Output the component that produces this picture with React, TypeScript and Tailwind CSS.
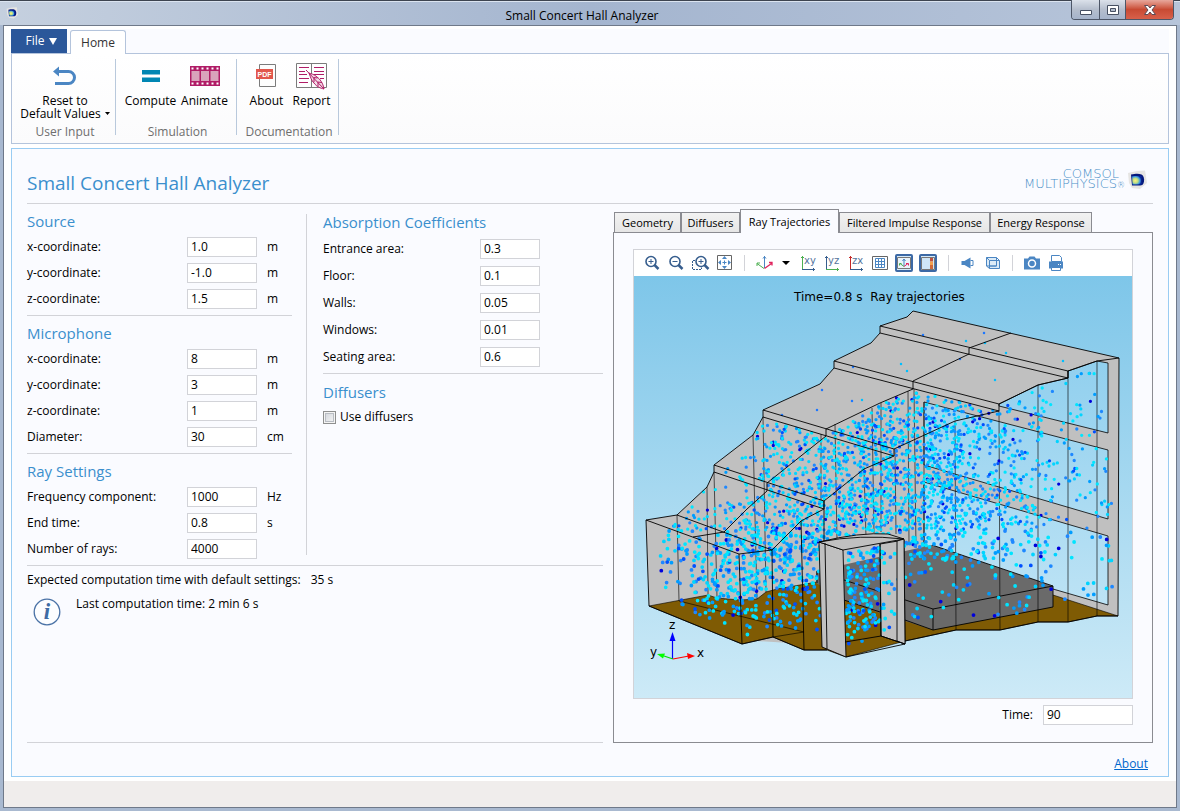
import { useId, useState, type ReactNode } from "react";

interface FieldProps {
  label: string
  value: string
  unit?: string
}

type Point = [number, number]

const TABS = [
  { name: "Geometry", width: "w-[67px]" },
  { name: "Diffusers", width: "w-[59px]" },
  { name: "Ray Trajectories", width: "w-[99px]" },
  { name: "Filtered Impulse Response", width: "w-[151px]" },
  { name: "Energy Response", width: "w-[102px]" },
]

// Small seeded generator so the ray positions are the same on every load
function createRandom(seed: number) {
  let a = seed
  return () => {
    a = (a + 0x6d2b79f5) | 0
    let t = Math.imul(a ^ (a >>> 15), 1 | a)
    t = (t + Math.imul(t ^ (t >>> 7), 61 | t)) ^ t
    return ((t ^ (t >>> 14)) >>> 0) / 4294967296
  }
}

function isInside([x, y]: Point, polygon: Point[]) {
  let inside = false
  for (let i = 0, j = polygon.length - 1; i < polygon.length; j = i++) {
    const [xi, yi] = polygon[i]
    const [xj, yj] = polygon[j]
    if (yi > y !== yj > y && x < ((xj - xi) * (y - yi)) / (yj - yi) + xi) inside = !inside
  }
  return inside
}

const HALL: Point[] = [
  [656, 530], [680, 518], [707, 488], [716, 476], [753, 438], [764, 419], [826, 437], [882, 404], [913, 389], [998, 411],
  [1040, 386], [1070, 376], [1104, 364], [1114, 430], [1114, 610], [1068, 614], [1000, 618], [906, 622], [904, 536],
  [870, 533], [820, 542], [821, 640], [744, 636], [690, 612], [660, 588],
]
const DOORWAY: Point[] = [[845, 552], [902, 544], [902, 636], [880, 634], [846, 648]]
const COLORS = ["#0000dc", "#1e88ff", "#00d4ff", "#009dff", "#0050ff", "#00e5ff"]
const COLOR_LIMITS = [0.035, 0.24, 0.44, 0.66, 0.74, 1]

function density(x: number, y: number) {
  const peak = 0.85 * Math.exp(-(((x - 868) / 100) ** 2) - ((y - 480) / 100) ** 2)
  const windows = 0.28 * Math.exp(-(((x - 975) / 70) ** 2) - ((y - 480) / 100) ** 2)
  const front = 0.5 * Math.exp(-(((x - 765) / 70) ** 2) - ((y - 570) / 55) ** 2)
  let d = 0.12 + peak + windows + front
  if (x < 762 && y < 500) d *= 0.4
  if (x > 905 && y > 560) d *= 0.4
  if (x > 1050) d *= 0.65
  if (y > 618) d *= 0.35
  return d
}

function scatterRays() {
  const random = createRandom(4000)
  const layers = COLORS.map(() => ({ far: "", near: "" }))
  const add = (x: number, y: number) => {
    const r = random()
    const index = COLOR_LIMITS.findIndex((limit) => r < limit)
    layers[index][y > 530 ? "near" : "far"] += `M${x.toFixed(1)} ${y.toFixed(1)}h.01`
  }
  for (let i = 0; i < 10000; i++) {
    const x = 646 + random() * 472
    const y = 360 + random() * 290
    if (isInside([x, y], HALL) && random() < density(x, y)) add(x, y)
  }
  for (let i = 0; i < 330; i++) {
    const x = 845 + random() * 60
    const y = 545 + random() * 105
    if (isInside([x, y], DOORWAY) && random() < (x > 880 || y > 630 ? 0.2 : 1)) add(x, y)
  }
  return layers
}

const RAYS = scatterRays()

function Field({ label, value, unit }: FieldProps) {
  const id = useId()
  return (
    <div className="flex h-5 items-center">
      <label htmlFor={id} className="w-40">{label}</label>
      <input id={id} defaultValue={value} className="h-5 w-[70px] border border-[#d2d3d8] bg-white px-[3px] pb-0.5 text-xs outline-none" />
      {unit && <span className="ml-2.5">{unit}</span>}
    </div>
  )
}

function Coefficient({ label, value }: FieldProps) {
  const id = useId()
  return (
    <div className="flex h-5 items-center">
      <label htmlFor={id} className="w-[157px]">{label}</label>
      <input id={id} defaultValue={value} className="h-5 w-[60px] border border-[#d2d3d8] bg-white px-[3px] pb-0.5 text-xs outline-none" />
    </div>
  )
}

function Section({ title, children }: { title: string; children: ReactNode }) {
  return (
    <section className="border-b border-[#d2d3d8] pb-1.5 pt-[7px] last:border-b-0">
      <h2 className="mb-1.5 text-[15px] leading-5 text-[#3a8fcd]">{title}</h2>
      <div className="flex flex-col gap-1.5">{children}</div>
    </section>
  )
}

function AppIcon({ className }: { className: string }) {
  return (
    <svg viewBox="0 0 20 20" className={className} aria-hidden="true">
      <defs>
        <radialGradient id="cube" cx="0.35" cy="0.55" r="0.65">
          <stop offset="0%" stopColor="#fff27a" />
          <stop offset="45%" stopColor="#b9dc86" />
          <stop offset="75%" stopColor="#3f9be0" />
          <stop offset="100%" stopColor="#0a2a9c" />
        </radialGradient>
      </defs>
      <path d="M1 3 10 1l8-.5L20 13l-7 6-8-1-3-5Z" fill="#e6e5e3" />
      <path d="M4 4.500c5-1 8-1 10.500 0 2 1 3 4 2.500 7-.5 3-2 4-4 4H5Z" fill="#06197d" />
      <path d="M5 6h9.500v8.500H5.500Z" fill="url(#cube)" />
    </svg>
  )
}

function TitleBar() {
  return (
    <header className="relative flex h-[25px] items-center justify-between bg-gradient-to-r from-[#c5d0df] via-[#a4b5cf] to-[#b7c5da] pl-1.5 shadow-[inset_0_1px_0_#3d4450,inset_0_2px_0_#dbe4f0]">
      <AppIcon className="h-3 w-3" />
      <h1 className="absolute inset-x-0 top-2 pr-4 text-center text-xs leading-4 text-black">Small Concert Hall Analyzer</h1>
      <div className="relative mr-1.5 flex h-5 self-start overflow-hidden rounded-b border border-t-0 border-[#4d5667]">
        <button aria-label="Minimize" className="flex w-7 items-center justify-center border-r border-[#4d5667] bg-gradient-to-b from-[#dbe1ea] via-[#b5becd] to-[#a5b3ca]">
          <svg viewBox="0 0 14 12" className="h-3 w-3.5"><path d="M1.500 6.500h11v4h-11Z" fill="#fff" stroke="#475062" /></svg>
        </button>
        <button aria-label="Maximize" className="flex w-[26px] items-center justify-center border-r border-[#4d5667] bg-gradient-to-b from-[#dbe1ea] via-[#b5becd] to-[#a5b3ca]">
          <svg viewBox="0 0 14 12" className="h-3 w-3.5"><path d="M1.500 1.500h11v9h-11ZM4.500 4.500v3h5v-3Z" fill="#fff" fillRule="evenodd" stroke="#475062" /></svg>
        </button>
        <button aria-label="Close" className="flex w-[47px] items-center justify-center bg-gradient-to-b from-[#e7a79c] via-[#c84a33] to-[#d8604a]">
          <svg viewBox="0 0 14 12" className="h-3 w-3.5"><path d="M1.500 1.500h3.500l2 2.500 2-2.500h3.500L9 6l3.500 4.500H9L7 8l-2 2.500H1.500L5 6Z" fill="#fff" stroke="#5c4a55" /></svg>
        </button>
      </div>
    </header>
  )
}

function ResetIcon() {
  return (
    <svg viewBox="0 0 24 20" className="h-5 w-6" fill="none">
      <path d="M3 5.500h12.500a6 6 0 0 1 0 12H2" stroke="#4b86c3" strokeWidth="3" />
      <path d="M0 5.500 6 .5v10Z" fill="#4b86c3" />
    </svg>
  )
}

function FilmIcon() {
  return (
    <svg viewBox="0 0 30 20" className="h-5 w-[30px]">
      <path d="M0 0h30v20H0Z" fill="#b01c66" />
      <path d="M1.500 5h8v10h-8ZM11 5h8v10h-8ZM20.500 5h8v10h-8Z" fill="#d9a3bb" />
      <path d="M1.500 2.500h27M1.500 17.500h27" stroke="#fff" strokeWidth="2" strokeDasharray="2 3" />
    </svg>
  )
}

function PdfIcon() {
  return (
    <svg viewBox="0 0 24 26" className="h-[26px] w-6">
      <path d="M4.500 1.500h16v22h-16Z" fill="#fdfdfd" stroke="#7b7b7b" />
      <path d="M1 6h17v10H1Z" fill="#e2574c" />
      <text x="9.500" y="13.500" textAnchor="middle" fontSize="7" fontWeight="700" fill="#fff" className="font-['Liberation_Sans',sans-serif]">PDF</text>
    </svg>
  )
}

function ReportIcon() {
  return (
    <svg viewBox="0 0 32 28" className="h-7 w-8" fill="none">
      <path d="M.5 1.500h30v24H.5ZM15.500 1.500v24" stroke="#7b7b7b" />
      <path d="M3 5.500h10M3 9.500h6M3 12.500h8M3 16.500h10M3 20.500h9M18 5.500h10M18 9.500h10M18 12.500h10M24 16.500h4" stroke="#b01c66" />
      <path d="M13 11c2 1 5 1 8 4 3 2 6 6 7 12-4-1-7-2-10-6-3-3-3-5-5-10Z" fill="#f3dbe6" stroke="#b01c66" />
      <path d="m10 8 18 19M18 16v4M22 20.500v4M17.500 15.500l4 .500M21.500 20l4.500.500" stroke="#b01c66" />
    </svg>
  )
}

function RibbonGroup({ title, width, children }: { title: string; width: string; children: ReactNode }) {
  return (
    <div className={`h-[76px] border-r border-[#b9c9dc] pl-[3px] ${width}`}>
      <div className="flex h-[65px] items-start justify-center">{children}</div>
      <div className="text-center leading-4 text-[#6e6e6e]">{title}</div>
    </div>
  )
}

function RibbonButton({ icon, width, children }: { icon: ReactNode; width: string; children: ReactNode }) {
  return (
    <button className={`flex flex-col items-center whitespace-nowrap leading-[13px] ${width}`}>
      <span className="mb-px flex h-[34px] items-center">{icon}</span>
      {children}
    </button>
  )
}

function Ribbon() {
  return (
    <div className="bg-[#fafbff]">
      <div className="flex h-6 items-end">
        <button className="mr-[3px] flex h-6 w-14 items-center justify-center gap-1 bg-[#2b579a] pl-1 text-white">
          File
          <svg viewBox="0 0 8 7" className="h-[7px] w-2"><path d="M0 0h8L4 7Z" fill="#fff" /></svg>
        </button>
        <button className="relative -mb-px h-6 w-14 rounded-t-[3px] border border-b-0 border-[#b4c4dc] bg-white text-xs text-[#333]">Home</button>
      </div>
      <div className="flex h-[91px] border border-[#b4c4dc] bg-gradient-to-b from-white to-[#fbfbfc] pt-[5px]">
        <RibbonGroup title="User Input" width="w-[104px]">
          <RibbonButton icon={<ResetIcon />} width="w-24">
            <span>Reset to</span>
            <span className="flex items-center gap-1">
              Default Values
              <svg viewBox="0 0 5 3" className="h-[3px] w-[5px]"><path d="M0 0h5L2.500 3Z" /></svg>
            </span>
          </RibbonButton>
        </RibbonGroup>
        <RibbonGroup title="Simulation" width="w-[121px]">
          <RibbonButton width="w-[54px]" icon={<svg viewBox="0 0 18 12" className="h-3 w-[18px]"><path d="M0 0h18v4.500H0ZM0 7.500h18V12H0Z" fill="#0086b3" /></svg>}>Compute</RibbonButton>
          <RibbonButton width="w-[54px]" icon={<FilmIcon />}>Animate</RibbonButton>
        </RibbonGroup>
        <RibbonGroup title="Documentation" width="w-[102px]">
          <RibbonButton width="w-[45px]" icon={<PdfIcon />}>About</RibbonButton>
          <RibbonButton width="w-[45px]" icon={<ReportIcon />}>Report</RibbonButton>
        </RibbonGroup>
      </div>
    </div>
  )
}

function ToolButton({ label, children }: { label: string; children: ReactNode }) {
  return (
    <button aria-label={label} className="flex h-6 w-6 shrink-0 items-center justify-center">
      <svg viewBox="0 0 20 20" className="h-5 w-5" fill="none">{children}</svg>
    </button>
  )
}

function Magnifier() {
  return (
    <>
      <circle cx="9" cy="8.500" r="5" stroke="#365d8d" strokeWidth="1.600" />
      <path d="m12.500 12 4 4" stroke="#365d8d" strokeWidth="2.500" />
    </>
  )
}

function AxisView({ label, up, side }: { label: string; up: string; side: string }) {
  return (
    <>
      <path d="M4.500 3v13.500" stroke={up} />
      <path d="M3 4.500h3" stroke={up} />
      <path d="M4 16.500h13" stroke={side} />
      <path d="M15.500 15v3" stroke={side} />
      <text x="6" y="11" fontSize="10" fill="#54749c" className="font-['DejaVu_Sans',sans-serif]">{label}</text>
    </>
  )
}

function Separator() {
  return (
    <div className="flex w-4 shrink-0 justify-center">
      <div className="h-4 w-px bg-[#d2d3d8]" />
    </div>
  )
}

function Toolbar() {
  return (
    <div className="flex h-[26px] items-center bg-white pl-1.5">
      <ToolButton label="Zoom in"><Magnifier /><path d="M6.500 8.500h5M9 6v5" stroke="#365d8d" /></ToolButton>
      <ToolButton label="Zoom out"><Magnifier /><path d="M6.500 8.500h5" stroke="#365d8d" /></ToolButton>
      <ToolButton label="Zoom box">
        <g transform="translate(2)"><Magnifier /><path d="M6.500 8.500h5M9 6v5" stroke="#365d8d" /></g>
        <path d="M5 7.500H2.500v9h9v-2" stroke="#365d8d" strokeDasharray="2 1" />
      </ToolButton>
      <ToolButton label="Zoom extents">
        <path d="M3.500 2.500h14v14h-14Z" stroke="#666" />
        <path d="m10.500 3 2.500 3H8ZM10.500 16l2.500-3H8ZM4 9.500 7 7v5ZM17 9.500 14 7v5Z" fill="#4b86c3" />
        <path d="M8.500 9.500h4M10.500 7.500v4" stroke="#4b86c3" />
      </ToolButton>
      <Separator />
      <ToolButton label="Go to default view">
        <path d="M10.500 3v12" stroke="#4b86c3" />
        <path d="m9 5.500 1.500-2 1.500 2" stroke="#4b86c3" />
        <path d="M10 15.500 3 10.500M3 13v-3h3" stroke="#4caf50" />
        <path d="m10.500 15.500 7-5M15 9.500h3v3" stroke="#e0245e" strokeWidth="1.300" />
      </ToolButton>
      <button aria-label="View options" className="flex h-6 w-5 items-center justify-center">
        <svg viewBox="0 0 8 4" className="h-1 w-2"><path d="M0 0h8L4 4Z" /></svg>
      </button>
      <ToolButton label="xy view"><AxisView label="xy" up="#4caf50" side="#365d8d" /></ToolButton>
      <ToolButton label="yz view"><AxisView label="yz" up="#365d8d" side="#4caf50" /></ToolButton>
      <ToolButton label="zx view"><AxisView label="zx" up="#c62828" side="#365d8d" /></ToolButton>
      <ToolButton label="Show grid">
        <path d="M2.500 3.500h15v13h-15Z" stroke="#666" />
        <path d="M5.500 5.500h9v9h-9ZM8.500 5.500v9M11.500 5.500v9M5.500 8.500h9M5.500 11.500h9" stroke="#4b86c3" />
      </ToolButton>
      <ToolButton label="Show axis orientation">
        <rect x="2" y="2" width="16" height="16" rx="1" fill="#d6eaf8" stroke="#3c69a5" strokeWidth="2" />
        <path d="M3.500 4.500h13v11h-13Z" fill="#eaf4fb" stroke="#777" />
        <path d="M10 6v7M8.500 8 10 6l1.500 2" stroke="#4b86c3" />
        <path d="m10 13.500-4-3M5.500 12.500v-2h2" stroke="#4caf50" />
        <path d="m10 13.500 4-3M12 10.500h2.500v2" stroke="#e0245e" />
      </ToolButton>
      <ToolButton label="Show legends">
        <rect x="2" y="2" width="16" height="16" rx="1" fill="#d6eaf8" stroke="#3c69a5" strokeWidth="2" />
        <path d="M3.500 4.500h13v12h-13Z" fill="#cfe6f7" stroke="#777" />
        <path d="M12 5h3v3.500h-3Z" fill="#c0503c" />
        <path d="M12 8.500h3v3.500h-3Z" fill="#f6a04d" />
        <path d="M12 12h3v4h-3Z" fill="#d0693a" />
      </ToolButton>
      <Separator />
      <ToolButton label="Scene light">
        <path d="M3.500 8h3l6-3.500v11l-6-3.500h-3Z" fill="#4b86c3" />
        <path d="M12.500 7.500h2.500v5h-2.500" stroke="#4b86c3" />
      </ToolButton>
      <ToolButton label="Transparency">
        <path d="M4.500 4.500h10v8.500h-10ZM7.500 7.500h10v8h-10Z" fill="#dcebf7" stroke="#4b86c3" />
        <path d="m4.500 4.500 3 3M14.500 4.500l3 3M4.500 13l3 2.500M7.500 13h7V7.500" stroke="#4b86c3" />
      </ToolButton>
      <Separator />
      <ToolButton label="Image snapshot">
        <path d="M2 5.500h4l1.500-2h5l1.500 2h4v11H2Z" fill="#4b86c3" />
        <circle cx="10" cy="10.500" r="3.500" stroke="#fff" strokeWidth="1.500" />
      </ToolButton>
      <ToolButton label="Print">
        <path d="M5.500 2.500h8l2 2v4h-10Z" fill="#fff" stroke="#4b86c3" />
        <path d="M3 8.500h14v7H3Z" fill="#4b86c3" />
        <path d="M5.500 14.500h9v3h-9Z" fill="#fff" stroke="#4b86c3" />
        <path d="M12 11.500h1M14 11.500h1" stroke="#fff" />
      </ToolButton>
    </div>
  )
}

function RayPlot() {
  return (
    <svg viewBox="634 276 498 422" className="block h-auto w-full" role="img" aria-label="Ray trajectories">
      <defs>
        <linearGradient id="sky" x1="0" y1="0" x2="0" y2="1">
          <stop offset="0%" stopColor="#7ec6e9" />
          <stop offset="100%" stopColor="#cdeaf7" />
        </linearGradient>
        <linearGradient id="glass" gradientUnits="userSpaceOnUse" x1="0" y1="276" x2="0" y2="698">
          <stop offset="0%" stopColor="#82c9ec" />
          <stop offset="100%" stopColor="#cdeaf7" />
        </linearGradient>
      </defs>
      <rect x="634" y="276" width="498" height="422" fill="url(#sky)" />
      <text x="794" y="301" fontSize="12" className="font-['DejaVu_Sans',sans-serif]">Time=0.8 s&#160; Ray trajectories</text>

      {/* walls and roof */}
      <path d="M913 311 1119 358 1118 616H1097L1068 622H1038L1000 630H956L905 640 820 645 742 640 649 606 646 520 677 515 707 487 714 472V465L753 435 763 417V410L820 384 834 368V361L871 343 880 333V326L907 317Z" fill="#c0c0c0" />

      {/* windows */}
      <g fill="url(#glass)" stroke="#000" strokeWidth="0.800">
        <path d="M999 404 1038 385 1068 378V371L1097 361 1108 363V433L999 406Z" />
        <path d="M924 402 1108 450V519L924 465Z" />
        <path d="M924 482 1108 536V605L1053 589 924 546Z" />
      </g>

      {/* floor and stage */}
      <path d="M649 606 708 595 717 598 740 600 757 599 766 592 777 589 817 582 932 560 1053 595 1118 616H1097L1068 622H1038L1000 630H956L905 641 846 657 827 650H804L773 637 742 644Z" fill="#7f5b04" stroke="#000" strokeWidth="0.600" />
      <path d="M816 571 932 545 1053 586V607L933 630 880 613 844 600 816 583Z" fill="#6a6a6a" />
      <path d="M932 545 1053 586V607L933 630 905 620M844 580 933 609 1053 586M933 609V630M817 571v12M844 600 880 612" stroke="#000" strokeWidth="0.900" fill="none" />
      <path d="M880 544 904 540 905 644 881 636Z" fill="#c0c0c0" stroke="#000" strokeWidth="0.900" />

      {/* wall edges behind the rays */}
      <g stroke="#000" strokeOpacity="0.700" fill="none" strokeWidth="0.900">
        <path d="M677 515 679 601 804 632 773 637M707 487 708 595M714 472 717 598M753 435 757 599M763 417 766 592M821 434V500M835 424 837 540M872 408 874 533M881 403V532M864 469 866 537M908 391 909 545M914 389 916 548M895 449 896 534M924 402V547" />
        <path d="M955 421 956 630M999 411 1000 630M1038 385V622M1068 371V622M1097 361V616" />
      </g>

      <g strokeLinecap="round" fill="none">
        {RAYS.map((layer, index) => <path key={COLORS[index]} d={layer.far} stroke={COLORS[index]} strokeWidth="3.300" />)}
        {RAYS.map((layer, index) => <path key={COLORS[index]} d={layer.near} stroke={COLORS[index]} strokeWidth="3.800" />)}
        <path d="M853 367h.01M822 390h.01M852 401h.01M817 410h.01M782 415h.01M923 335h.01M984 333h.01M960 359h.01" stroke="#1e78ff" strokeWidth="2.500" />
        <path d="M862 400h.01M966 341h.01M985 343h.01M1006 353h.01M1063 361h.01M995 380h.01M907 371h.01M901 364h.01" stroke="#00bfff" strokeWidth="2.500" />
      </g>

      {/* roof steps and outline */}
      <g stroke="#000" fill="none" strokeWidth="0.900" strokeLinejoin="round">
        <path d="M1119 358 1118 616H1097L1068 622H1038L1000 630H956L905 641M827 650H804L773 637 742 644 649 606 646 520 677 515 707 487 714 472V465L753 435 763 417V410L820 384 834 368V361L871 343 880 333V326L907 317 913 311 1119 358" />
        <path d="M1119 358 1097 361 1068 371V378L1038 385 999 404V411L955 421 894 449V456L864 469 824 501V509L801 521 772 550 739 554 742 644M646 520 739 554M772 550 773 637M801 521 804 650M824 501V541" />
        <path d="M1011 333 969 348V354L913 381V389L880 403 826 429V436L767 483V491L747 509 724 532 693 537" />
        <path d="M880 326 1068 371M880 333 1068 378M834 361 999 404M834 368 999 411M763 410 894 449M763 417 894 456M714 465 824 501M714 472 824 509M677 515 772 550" />
      </g>

      {/* entrance portal */}
      <g stroke="#000" strokeWidth="0.900" strokeLinejoin="round">
        <path d="M819 542 843 550 846 657 822 647Z" fill="#c0c0c0" />
        <path d="M819 542Q860 532 888 534L904 539 843 550Z" fill="#c0c0c0" />
        <path d="M897 541 904 539 905 644 897 641Z" fill="#c0c0c0" />
        <path d="M825 543 827 649M819 542Q860 534 904 539M880 544 881 636 905 644 846 657M881 636 845 642" fill="none" />
      </g>

      {/* axis triad */}
      <path d="M672.500 659V640" stroke="#00f" strokeWidth="1.200" />
      <path d="m669.500 641 3-9 3 9Z" fill="#00f" />
      <path d="m673 659-9-3" stroke="#0d0" strokeWidth="1.200" />
      <path d="m657 654 8-.5-2 5Z" fill="#0f0" />
      <path d="m673 659 16-3" stroke="#f00" strokeWidth="1.200" />
      <path d="m687 653 8 3-7 3Z" fill="#f00" />
      <g fontSize="12" className="font-['DejaVu_Sans',sans-serif]">
        <text x="669" y="629">z</text>
        <text x="650" y="656">y</text>
        <text x="697" y="657">x</text>
      </g>
    </svg>
  )
}

function Results() {
  const [activeTab, setActiveTab] = useState("Ray Trajectories")

  return (
    <div className="ml-2.5 flex flex-1 flex-col pt-[5px]">
      <div role="tablist" className="flex h-[23px] items-end pl-px">
        {TABS.map(({ name, width }) => (
          <button
            key={name}
            role="tab"
            aria-selected={name === activeTab}
            onClick={() => setActiveTab(name)}
            className={`whitespace-nowrap border border-b-0 border-[#8a8b91] text-[11px] leading-4 ${width} ${
              name === activeTab ? "relative -mb-px h-6 bg-[#fafbff]" : "h-5 bg-gradient-to-b from-[#f2f2f2] to-[#e6e6e6]"
            }`}
          >
            {name}
          </button>
        ))}
      </div>
      <div className="flex-1 border border-[#8a8b91] px-[19px] pt-4">
        <div className="border border-[#d2d3d8]">
          <Toolbar />
          <RayPlot />
        </div>
        <div className="mt-1.5 flex items-center justify-end gap-2.5">
          <label htmlFor="time">Time:</label>
          <input id="time" defaultValue="90" className="h-5 w-[90px] border border-[#d2d3d8] bg-white px-[3px] pb-0.5 text-xs outline-none" />
        </div>
      </div>
    </div>
  )
}

function Settings() {
  return (
    <div className="flex w-[576px] shrink-0 flex-col border-b border-[#d2d3d8]">
      <div className="flex border-b border-[#d2d3d8]">
        <div className="w-[265px]">
          <Section title="Source">
            <Field label="x-coordinate:" value="1.0" unit="m" />
            <Field label="y-coordinate:" value="-1.0" unit="m" />
            <Field label="z-coordinate:" value="1.5" unit="m" />
          </Section>
          <Section title="Microphone">
            <Field label="x-coordinate:" value="8" unit="m" />
            <Field label="y-coordinate:" value="3" unit="m" />
            <Field label="z-coordinate:" value="1" unit="m" />
            <Field label="Diameter:" value="30" unit="cm" />
          </Section>
          <Section title="Ray Settings">
            <Field label="Frequency component:" value="1000" unit="Hz" />
            <Field label="End time:" value="0.8" unit="s" />
            <Field label="Number of rays:" value="4000" />
          </Section>
        </div>
        <div className="mb-2.5 ml-3.5 mt-2.5 w-px bg-[#d2d3d8]" />
        <div className="ml-4 flex-1">
          <section className="border-b border-[#d2d3d8] pb-1.5 pt-2">
            <h2 className="mb-[7px] text-[15px] leading-5 text-[#3a8fcd]">Absorption Coefficients</h2>
            <div className="flex flex-col gap-[7px]">
              <Coefficient label="Entrance area:" value="0.3" />
              <Coefficient label="Floor:" value="0.1" />
              <Coefficient label="Walls:" value="0.05" />
              <Coefficient label="Windows:" value="0.01" />
              <Coefficient label="Seating area:" value="0.6" />
            </div>
          </section>
          <section className="pt-2">
            <h2 className="mb-[5px] text-[15px] leading-5 text-[#3a8fcd]">Diffusers</h2>
            <label className="flex h-5 items-center gap-1">
              <input type="checkbox" className="h-[13px] w-[13px] appearance-none border border-[#8e8f8f] bg-gradient-to-br from-[#cfd3da] to-[#f7f7f7] shadow-[inset_0_0_0_1px_#f4f4f4,inset_0_0_0_2px_#b8bcc3] checked:bg-[#3a8fcd]" />
              Use diffusers
            </label>
          </section>
        </div>
      </div>
      <p className="mt-1.5 flex gap-2.5 leading-4"><span>Expected computation time with default settings:</span><span>35 s</span></p>
      <div className="mt-2 flex gap-[15px] pl-1.5">
        <svg viewBox="0 0 28 28" className="mt-0.5 h-7 w-7">
          <circle cx="14" cy="14" r="12.800" fill="#fcfdff" stroke="#4a72a6" strokeWidth="1.300" />
          <text x="14" y="21" textAnchor="middle" fontSize="23" fontStyle="italic" fontWeight="700" fill="#3f6ba3" className="font-['Liberation_Serif',serif]">i</text>
        </svg>
        <p className="leading-4">Last computation time: 2 min 6 s</p>
      </div>
    </div>
  )
}

export default function App() {
  return (
    <div className="flex min-h-screen flex-col bg-[#a9b9d0] font-['Open_Sans',sans-serif] text-xs text-black">
      <TitleBar />
      <div className="mx-[3px] mb-[3px] flex flex-1 flex-col border border-[#6f7989] bg-white">
        <div className="flex flex-1 flex-col px-[7px] pb-1 pt-[3px]">
          <Ribbon />
          <main className="mt-1 flex flex-1 flex-col border border-[#99ccf3] bg-[#fafbff] px-[15px]">
            <div className="flex h-[55px] items-center justify-between border-b border-[#d2d3d8] pt-3.5">
              <h1 className="text-[19px] leading-7 text-[#3a8fcd]">Small Concert Hall Analyzer</h1>
              <div className="flex items-center gap-0.5 pb-1.5 pr-1.5 font-['DejaVu_Sans',sans-serif] text-[13px] font-extralight leading-[10px] text-[#4a90c8]">
                <div className="flex flex-col items-end">
                  <span className="pr-1.5">COMSOL</span>
                  <span>MULTIPHYSICS<span className="text-[8px]">®</span></span>
                </div>
                <AppIcon className="h-5 w-5" />
              </div>
            </div>
            <div className="flex flex-1">
              <Settings />
              <Results />
            </div>
            <footer className="flex h-[33px] items-center justify-end pr-[5px] pt-2">
              <a href="#about" className="text-[#0066cc] underline">About</a>
            </footer>
          </main>
        </div>
        <div className="h-[26px] bg-[#f0edec]" />
      </div>
    </div>
  )
}
